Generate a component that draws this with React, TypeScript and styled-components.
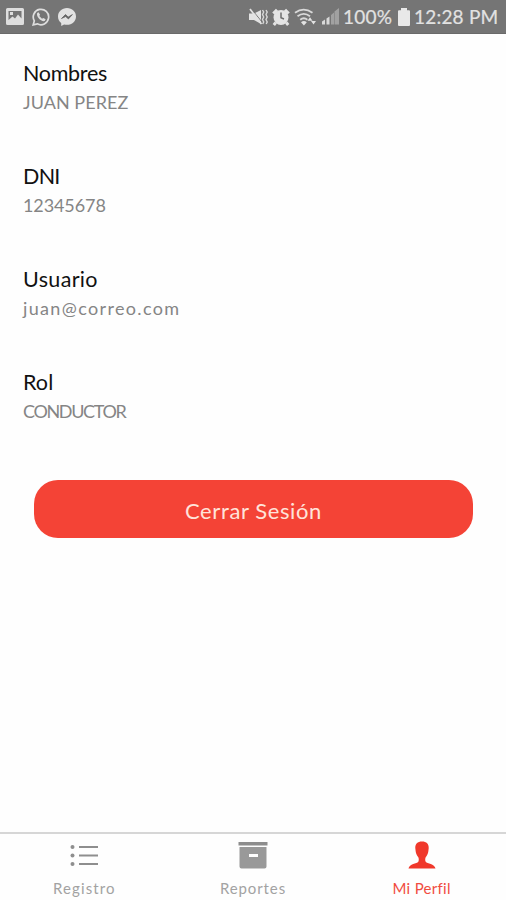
import React from "react";
import styled, { createGlobalStyle } from "styled-components";

const GlobalStyle = createGlobalStyle`
  * { box-sizing: border-box; }
  body {
    margin: 0;
    background: #fefefe;
    font-family: Lato, "Open Sans", sans-serif;
    overflow: hidden;
  }
`;

const Screen = styled.div`
  display: flex;
  flex-direction: column;
  width: 506px;
  height: 900px;
  background: #fefefe;
`;

const StatusBar = styled.header`
  display: flex;
  justify-content: space-between;
  flex: none;
  height: 34px;
  padding: 0 7px 0 6px;
  background: #757575;
  border-bottom: 1px solid #6a6a6a;
  color: #e2e2e2;
`;

const StatusGroup = styled.div<{ $gap: number }>`
  display: flex;
  align-items: center;
  gap: ${(p) => p.$gap}px;
  svg { display: block; flex: none; }
`;

const StatusText = styled.span<{ $width: number; $spacing: number }>`
  width: ${(p) => p.$width}px;
  font-size: 19px;
  line-height: 33px;
  letter-spacing: ${(p) => p.$spacing}px;
  white-space: nowrap;
  -webkit-text-stroke: 0.2px #e2e2e2;
`;

const Profile = styled.main`
  display: flex;
  flex-direction: column;
  flex: 1;
  padding: 24px 33px 0 23px;
`;

const Field = styled.section`
  height: 103px;
`;

const Label = styled.h2<{ $spacing: number }>`
  margin: 0;
  font-size: 21.5px;
  font-weight: 400;
  line-height: 30px;
  letter-spacing: ${(p) => p.$spacing}px;
  color: #111;
`;

const Value = styled.p<{ $spacing: number }>`
  margin: 0;
  font-size: 18px;
  line-height: 29px;
  letter-spacing: ${(p) => p.$spacing}px;
  color: #858585;
`;

const LogoutButton = styled.button`
  flex: none;
  height: 58px;
  margin: 10px 0 0 11px;
  padding: 2px 0 0;
  border: 0;
  border-radius: 24px;
  background: #f44336;
  color: #ffe3da;
  font-family: inherit;
  font-size: 22px;
  letter-spacing: 0.6px;
`;

const TabBar = styled.nav`
  display: grid;
  grid-template-columns: repeat(3, 1fr);
  flex: none;
  height: 68px;
  border-top: 2px solid #d6d6d6;
`;

const Tab = styled.a<{ $active?: boolean }>`
  display: flex;
  flex-direction: column;
  align-items: center;
  padding-top: 6px;
  color: ${(p) => (p.$active ? "#f0382b" : "#999")};
  svg { display: block; }
`;

const TabLabel = styled.span<{ $spacing: number }>`
  margin-top: 6px;
  font-size: 15px;
  line-height: 20px;
  letter-spacing: ${(p) => p.$spacing}px;
  opacity: 0.9;
`;

const PictureIcon = () => (
  <svg width="18" height="17" viewBox="0 0 18 17">
    <path fill="#dedede" fillRule="evenodd" d="M1.5 0h15Q18 0 18 1.5v14Q18 17 16.500 17h-15Q0 17 0 15.500v-14Q0 0 1.500 0ZM2.500 3v9l4-3.500 2.500 2 3-4 3.500 4V3ZM4 4h3v3H4Z" />
  </svg>
);

const WhatsappIcon = () => (
  <svg width="18" height="18" viewBox="0 0 18 18">
    <path d="M1.200 16.800 2.300 12.900A7.700 7.700 0 1 1 5.300 15.800Z" fill="none" stroke="#dedede" strokeWidth="1.700" />
    <path d="M5.200 5.100 6.500 4.200 8.100 6.800 7.300 8 10 10.700 11.300 9.900 13.700 11.300 12.700 13.100C9.400 14.300 3.700 8.500 5.200 5.100Z" fill="#dedede" />
  </svg>
);

const MessengerIcon = () => (
  <svg width="18" height="18" viewBox="0 0 18 18">
    <path d="M9 0C3.900 0 0 3.600 0 8.400c0 2.700 1.200 5 3.200 6.500V18l2.900-1.600c.9.300 1.900.4 2.900.4 5.100 0 9-3.600 9-8.400S14.100 0 9 0Z" fill="#e2e2e2" />
    <path d="m3.500 10.500 4-4 2.700 2.600 4.200-2.500-4 4.300-2.700-2.400Z" fill="#666" stroke="#666" strokeWidth=".8" />
  </svg>
);

const MuteIcon = () => (
  <svg width="19" height="18" viewBox="0 0 19 18">
    <path d="M0 5.500h5L12 2v14l-7-4H0Z" fill="#e2e2e2" />
    <path d="m2.500 1 10.500 13" stroke="#757575" strokeWidth="1" />
    <path d="m1 1 11.500 15" stroke="#e2e2e2" strokeWidth="1.700" />
    <path d="m13.500 2 1.200 2-1.200 2.500L14.700 9l-1.200 2.500 1.200 2.500-1 2M17 2l1.200 2L17 6.500 18.200 9 17 11.500l1.200 2.500-1 2" fill="none" stroke="#d8d8d8" strokeWidth="1.400" />
  </svg>
);

const AlarmIcon = () => (
  <svg width="18" height="18" viewBox="0 0 18 18">
    <circle cx="9" cy="9.500" r="7.500" fill="#e4e4e4" />
    <path d="M1.300 5.500 5 1.700M16.700 5.500 13 1.700M3.800 14.500 1.800 17M14.200 14.500l2 2.500" stroke="#e4e4e4" strokeWidth="3" />
    <path d="M9 4.500v5.300l3 1.200" fill="none" stroke="#6e6e6e" strokeWidth="1.500" />
  </svg>
);

const WifiIcon = () => (
  <svg width="24" height="18" viewBox="0 0 24 18">
    <path d="M1 4.700Q9.500-1.500 18.500 4.700M3.500 8.200q6.300-4.700 12.500 0M6.200 11.700q3.600-2.900 7.200 0" fill="none" stroke="#d9d9d9" strokeWidth="1.800" />
    <path d="m9.900 17.500-2.900-3.300q2.900-2.200 5.800 0ZM13.500 12.700h5L16 9.200ZM17 13h5l-2.500 3.500Z" fill="#e2e2e2" />
  </svg>
);

const SignalIcon = () => (
  <svg width="17" height="17" viewBox="0 0 17 17">
    <path d="M0 16.500v-3l3-2v5ZM4.500 16.500v-6l3-2v8Z" fill="#d8d8d8" />
    <path d="M9 16.500V7l3-2.500v12ZM12.500 16.500V3.500L17 0v16.500Z" fill="#a1a1a1" />
  </svg>
);

const BatteryIcon = () => (
  <svg width="12" height="18" viewBox="0 0 12 18">
    <path d="M3 0h6v2.200h2q1 0 1 1V17q0 1-1 1H1q-1 0-1-1V3.200q0-1 1-1h2Z" fill="#e8e8e8" />
  </svg>
);

const ListIcon = () => (
  <svg width="30" height="32" viewBox="0 0 30 32">
    <g fill="#8e8e8e">
      <circle cx="3.500" cy="7" r="2" />
      <circle cx="3.500" cy="15.500" r="2" />
      <circle cx="3.500" cy="24" r="2" />
      <path d="M10 6h19v2H10zM10 14.500h19v2H10zM10 23h19v2H10z" />
    </g>
  </svg>
);

const ArchiveIcon = () => (
  <svg width="30" height="32" viewBox="0 0 30 32">
    <path d="M.5 2h29v3.500H.5z" fill="#8d8d8d" />
    <path fillRule="evenodd" d="M1.500 7h27v19.500q0 2-2 2h-23q-2 0-2-2ZM11 14v3h9v-3Z" fill="#999" />
  </svg>
);

const PersonIcon = () => (
  <svg width="30" height="32" viewBox="0 0 30 32">
    <path d="M15 1.500c-4.500 0-7 2.500-6.700 6.700l.4 3.300c.2 2.200 1.300 4.200 2.600 5.700.6 1 .7 3.500 0 4.500-1.400 2-9 1.900-9.800 6.800h27c-.8-4.900-8.400-4.800-9.800-6.800-.7-1-.6-3.500 0-4.500 1.300-1.500 2.400-3.500 2.600-5.700l.4-3.300C22 4 19.500 1.500 15 1.500Z" fill="#f0382b" />
  </svg>
);

const fields = [
  { label: "Nombres", value: "JUAN PEREZ", labelSpacing: -0.3, valueSpacing: 0.05 },
  { label: "DNI", value: "12345678", labelSpacing: -0.7, valueSpacing: -0.1 },
  { label: "Usuario", value: "juan@correo.com", labelSpacing: 0.35, valueSpacing: 1.35 },
  { label: "Rol", value: "CONDUCTOR", labelSpacing: 0.1, valueSpacing: -1.35 },
];

const tabs = [
  { label: "Registro", icon: <ListIcon />, spacing: 1.1, active: false },
  { label: "Reportes", icon: <ArchiveIcon />, spacing: 0.9, active: false },
  { label: "Mi Perfil", icon: <PersonIcon />, spacing: 0.3, active: true },
];

export default function App() {
  return (
    <Screen>
      <GlobalStyle />
      <StatusBar>
        <StatusGroup $gap={8}>
          <PictureIcon />
          <WhatsappIcon />
          <MessengerIcon />
        </StatusGroup>
        <StatusGroup $gap={4}>
          <MuteIcon />
          <AlarmIcon />
          <WifiIcon />
          <SignalIcon />
          <StatusText $width={51} $spacing={0.2}>100%</StatusText>
          <BatteryIcon />
          <StatusText $width={85} $spacing={0.2}>12:28 PM</StatusText>
        </StatusGroup>
      </StatusBar>
      <Profile>
        {fields.map((f) => (
          <Field key={f.label}>
            <Label $spacing={f.labelSpacing}>{f.label}</Label>
            <Value $spacing={f.valueSpacing}>{f.value}</Value>
          </Field>
        ))}
        <LogoutButton>Cerrar Sesión</LogoutButton>
      </Profile>
      <TabBar>
        {tabs.map((t) => (
          <Tab key={t.label} $active={t.active}>
            {t.icon}
            <TabLabel $spacing={t.spacing}>{t.label}</TabLabel>
          </Tab>
        ))}
      </TabBar>
    </Screen>
  );
}
